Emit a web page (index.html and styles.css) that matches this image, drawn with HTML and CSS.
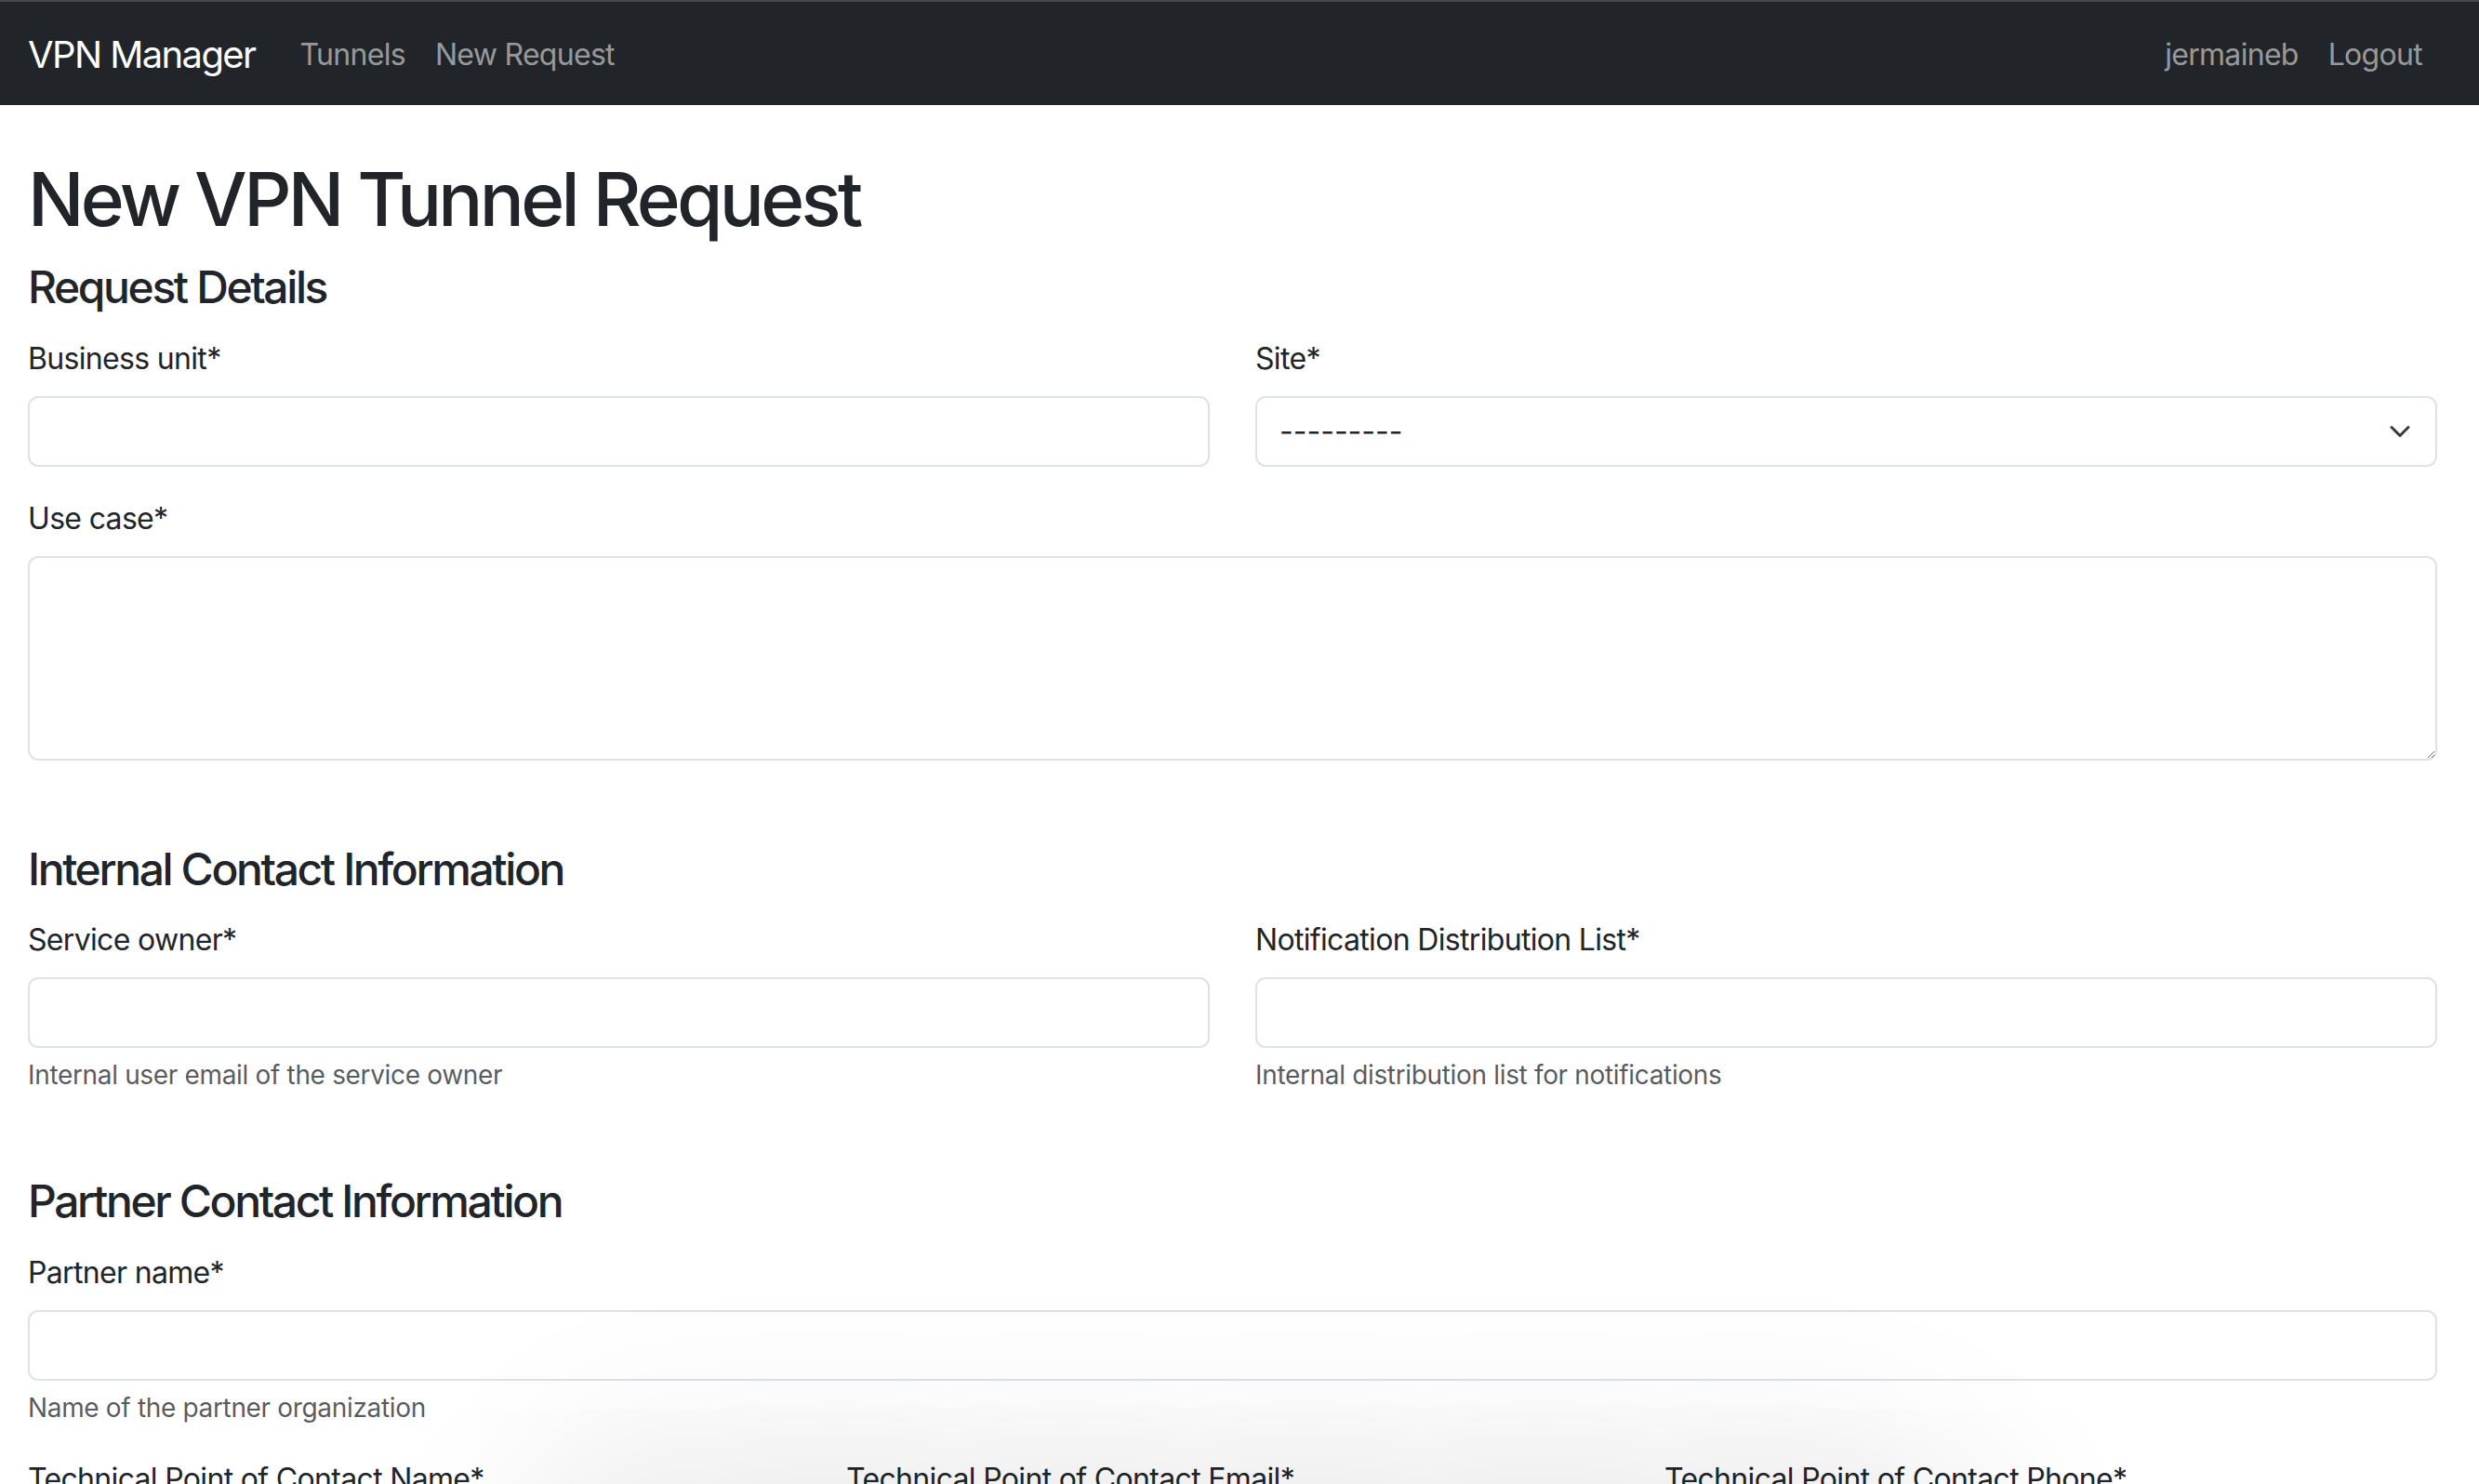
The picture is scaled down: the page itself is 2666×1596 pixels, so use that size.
FILE: index.html
```html
<!DOCTYPE html>
<html lang="en">
<head>
<meta charset="utf-8">
<title>New VPN Tunnel Request</title>
<link rel="stylesheet" href="styles.css">
</head>
<body>
<nav class="navbar">
  <a class="brand" href="#">VPN Manager</a>
  <div class="nav-links">
    <a class="nav-link" href="#">Tunnels</a>
    <a class="nav-link" href="#">New Request</a>
  </div>
  <div class="nav-links nav-right">
    <span class="nav-link">jermaineb</span>
    <a class="nav-link" href="#">Logout</a>
  </div>
</nav>

<main class="page">
  <h1 class="page-title">New VPN Tunnel Request</h1>

  <section class="section">
    <h4 class="section-title">Request Details</h4>
    <div class="grid-2">
      <div class="field">
        <label class="label">Business unit*</label>
        <input class="control" type="text">
      </div>
      <div class="field">
        <label class="label">Site*</label>
        <div class="select-wrap">
          <select class="control select"><option>---------</option></select>
          <svg class="chevron" viewBox="0 0 16 16" width="32" height="24"><path d="m2 5 6 6 6-6" fill="none" stroke="#343a40" stroke-width="2" stroke-linecap="round" stroke-linejoin="round"/></svg>
        </div>
      </div>
    </div>
    <div class="field">
      <label class="label">Use case*</label>
      <textarea class="control textarea"></textarea>
    </div>
  </section>

  <section class="section">
    <h4 class="section-title">Internal Contact Information</h4>
    <div class="grid-2">
      <div class="field">
        <label class="label">Service owner*</label>
        <input class="control" type="text">
        <div class="help">Internal user email of the service owner</div>
      </div>
      <div class="field">
        <label class="label">Notification Distribution List*</label>
        <input class="control" type="text">
        <div class="help">Internal distribution list for notifications</div>
      </div>
    </div>
  </section>

  <section class="section section-tight">
    <h4 class="section-title">Partner Contact Information</h4>
    <div class="field">
      <label class="label">Partner name*</label>
      <input class="control" type="text">
      <div class="help">Name of the partner organization</div>
    </div>
    <div class="grid-3">
      <div class="field">
        <label class="label">Technical Point of Contact Name*</label>
        <input class="control" type="text">
      </div>
      <div class="field">
        <label class="label">Technical Point of Contact Email*</label>
        <input class="control" type="text">
      </div>
      <div class="field">
        <label class="label">Technical Point of Contact Phone*</label>
        <input class="control" type="text">
      </div>
    </div>
  </section>
</main>

<div class="window-shadow"></div>
</body>
</html>
```

FILE: styles.css
```css
html, body {
  margin: 0;
  padding: 0;
  background: #ffffff;
}

body {
  font-family: Inter, "Noto Sans", sans-serif;
  color: #212529;
  font-size: 32px;
  line-height: 1.5;
}

/* Navbar */
.navbar {
  box-sizing: border-box;
  height: 113px;
  border-top: 2px solid #46484b;
  background: #212529;
  display: flex;
  align-items: center;
  padding: 2px 45px 0 30px;
}

.brand {
  font-size: 40px;
  color: #ffffff;
  text-decoration: none;
  margin-right: 32px;
  line-height: 1.5;
  letter-spacing: -0.04em;
}

.nav-links {
  display: flex;
}

.nav-right {
  margin-left: auto;
}

.nav-link {
  font-size: 32px;
  padding: 0 16px;
  color: rgba(255, 255, 255, 0.55);
  text-decoration: none;
  letter-spacing: -0.022em;
}

/* Page */
.page {
  padding: 53px 45px 0 30px;
}

.page-title {
  margin: 0 0 18px;
  font-size: 80px;
  font-weight: 500;
  line-height: 1.2;
  letter-spacing: -0.046em;
}

.section + .section {
  margin-top: 88px;
}

.section + .section-tight {
  margin-top: 54px;
}

.section-title {
  margin: 0 0 24px;
  font-size: 48px;
  font-weight: 500;
  line-height: 1.2;
  letter-spacing: -0.05em;
}

.grid-2 {
  display: grid;
  grid-template-columns: 1fr 1fr;
  column-gap: 49px;
}

.grid-3 {
  display: grid;
  grid-template-columns: 1fr 1fr 1fr;
  column-gap: 49px;
}

.field {
  margin-bottom: 32px;
}

.label {
  display: block;
  margin-bottom: 16px;
  font-size: 32px;
  line-height: 48px;
  letter-spacing: -0.021em;
}

.control {
  display: block;
  box-sizing: border-box;
  width: 100%;
  height: 76px;
  margin: 0;
  padding: 12px 24px;
  font-family: inherit;
  font-size: 32px;
  line-height: 48px;
  color: #212529;
  background: #ffffff;
  border: 2px solid #dee2e6;
  border-radius: 11px;
  outline: none;
}

.textarea {
  height: 220px;
  resize: vertical;
}

.select-wrap {
  position: relative;
}

.select {
  appearance: none;
  -webkit-appearance: none;
  padding: 0 72px 0 24px;
}

.chevron {
  position: absolute;
  right: 24px;
  top: 26px;
  pointer-events: none;
}

.help {
  margin-top: 8px;
  font-size: 28px;
  line-height: 42px;
  color: rgba(33, 37, 41, 0.75);
  letter-spacing: -0.012em;
}

.window-shadow {
  position: fixed;
  left: 650px;
  width: 1400px;
  top: 1650px;
  height: 80px;
  border-radius: 60px;
  box-shadow: 0 0 200px 90px rgba(0, 0, 0, 0.09);
  pointer-events: none;
}
```
